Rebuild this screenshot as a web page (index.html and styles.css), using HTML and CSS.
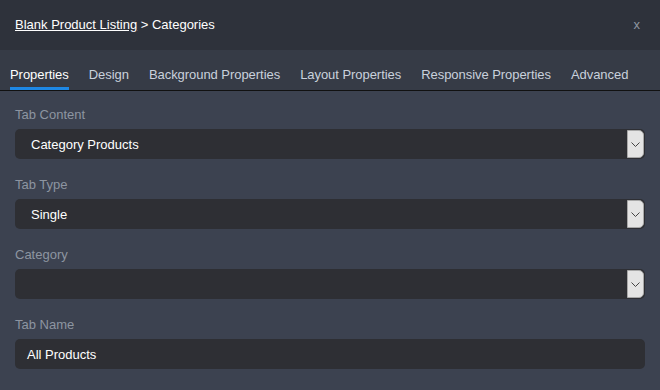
FILE: index.html
```html
<!DOCTYPE html>
<html lang="en">
<head>
    <meta charset="UTF-8">
    <meta name="viewport" content="width=device-width, initial-scale=1.0">
    <title>Categories</title>
    <link rel="stylesheet" href="styles.css">
</head>
<body>
    <div class="modal">
        <div class="modal-header">
            <div class="crumbs"><a href="#">Blank Product Listing</a> &gt; Categories</div>
            <span class="close">x</span>
        </div>
        <div class="tabs">
            <div class="tab active">Properties</div>
            <div class="tab">Design</div>
            <div class="tab">Background Properties</div>
            <div class="tab">Layout Properties</div>
            <div class="tab">Responsive Properties</div>
            <div class="tab">Advanced</div>
        </div>
        <div class="modal-body">
            <div class="field">
                <label>Tab Content</label>
                <div class="select">
                    <span class="value">Category Products</span>
                    <span class="arrow"><svg width="9" height="5" viewBox="0 0 9 5"><path d="M0.5 0.5 L4.5 4.5 L8.5 0.5" fill="none" stroke="#444" stroke-width="1"/></svg></span>
                </div>
            </div>
            <div class="field">
                <label>Tab Type</label>
                <div class="select">
                    <span class="value">Single</span>
                    <span class="arrow"><svg width="9" height="5" viewBox="0 0 9 5"><path d="M0.5 0.5 L4.5 4.5 L8.5 0.5" fill="none" stroke="#444" stroke-width="1"/></svg></span>
                </div>
            </div>
            <div class="field">
                <label>Category</label>
                <div class="select">
                    <span class="value"></span>
                    <span class="arrow"><svg width="9" height="5" viewBox="0 0 9 5"><path d="M0.5 0.5 L4.5 4.5 L8.5 0.5" fill="none" stroke="#444" stroke-width="1"/></svg></span>
                </div>
            </div>
            <div class="field">
                <label>Tab Name</label>
                <div class="input">All Products</div>
            </div>
        </div>
    </div>
</body>
</html>
```

FILE: styles.css
```css
body {
    margin: 0;
    font-family: 'Liberation Sans', Arial, sans-serif;
    font-size: 13px;
    background-color: #3c4250;
}

.modal {
    width: 660px;
    height: 390px;
    overflow: hidden;
    background-color: #3c4250;
}

.modal-header {
    height: 50px;
    display: flex;
    align-items: center;
    justify-content: space-between;
    padding: 0 20px 2px 15px;
    box-sizing: border-box;
    background-color: #2e323b;
    color: #fff;
}

.crumbs a {
    color: #fff;
    text-decoration: underline;
}

.close {
    color: #9096a0;
    font-size: 13px;
}

.tabs {
    display: flex;
    gap: 20px;
    padding: 0 10px;
    background-color: #363b46;
    border-bottom: 1px solid #111;
    box-sizing: border-box;
    height: 41px;
}

.tab {
    display: flex;
    align-items: center;
    padding-top: 11px;
    box-sizing: border-box;
    height: 40px;
    color: #c9d1dc;
    letter-spacing: -0.05px;
    border-bottom: 3px solid transparent;
}

.tab.active {
    color: #fff;
    border-bottom-color: #1e88e5;
}

.modal-body {
    padding: 16px 15px 0;
}

.field {
    margin-bottom: 18px;
}

.field label {
    display: block;
    color: #8d95a1;
    height: 16px;
    line-height: 16px;
    margin-bottom: 6px;
}

.select,
.input {
    height: 30px;
    border-radius: 5px;
    background-color: #2e2f34;
    color: #fff;
    display: flex;
    align-items: center;
    box-sizing: border-box;
}

.select {
    padding-left: 16px;
    padding-right: 1px;
}

.select .value {
    flex: 1;
}

.input {
    padding-left: 12px;
}

.arrow {
    width: 17px;
    height: 28px;
    box-sizing: border-box;
    background-color: #e4e4e4;
    border: 1px solid #a8a8a8;
    border-radius: 0 5px 5px 0;
    display: flex;
    align-items: center;
    justify-content: center;
}
```
